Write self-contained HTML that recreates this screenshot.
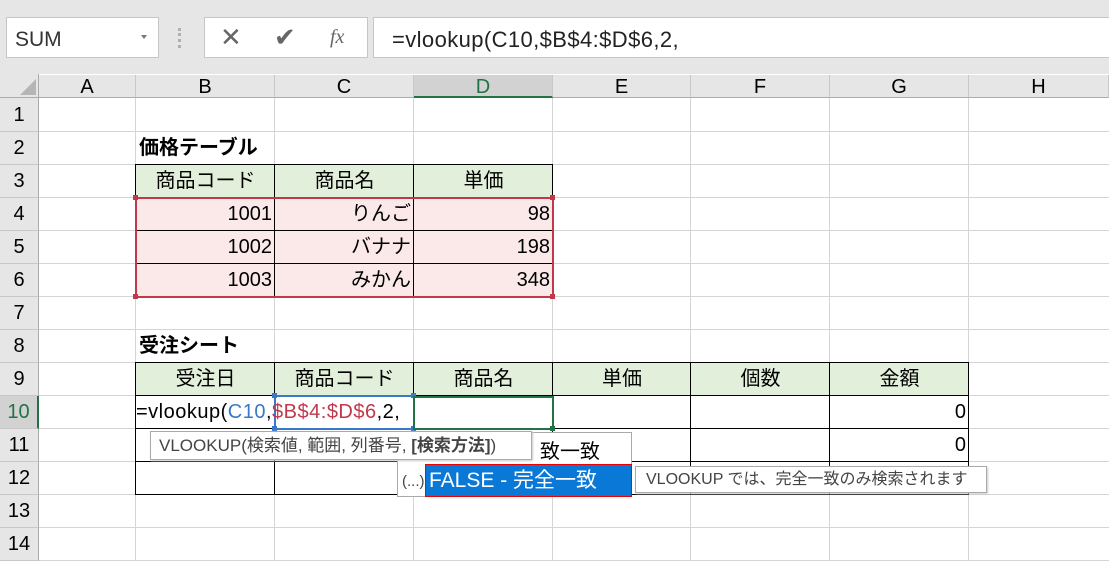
<!DOCTYPE html>
<html><head><meta charset="utf-8"><style>
*{margin:0;padding:0;box-sizing:border-box}
body{width:1109px;height:561px;overflow:hidden;background:#e6e6e6;font-family:"Liberation Sans","Noto Sans CJK JP",sans-serif;position:relative;color:#000}
.a{position:absolute}
.box{background:#fff;border:1px solid #c6c6c6}
.ch{position:absolute;top:75px;height:23px;text-align:center;font-size:20px;line-height:24px;border-right:1px solid #c8c8c8;border-bottom:1px solid #ababab}
.rh{position:absolute;left:0;width:39px;text-align:center;font-size:20px;border-bottom:1px solid #c8c8c8;border-right:1px solid #ababab}
.c{position:absolute;font-size:20px;line-height:34px;white-space:nowrap;padding:0 3px}
.r{text-align:right}.m{text-align:center}
</style></head><body>
<div class="a box" style="left:6px;top:17px;width:153px;height:41px"></div>
<div class="a" style="left:15px;top:28px;font-size:21px;color:#333">SUM</div>
<div class="a" style="left:141px;top:35px;width:0;height:0;border-left:3px solid transparent;border-right:3px solid transparent;border-top:4px solid #777"></div>
<div class="a" style="left:178px;top:28px;width:3px;height:20px;border-left:3px dotted #b0b0b0"></div>
<div class="a box" style="left:204px;top:17px;width:164px;height:41px"></div>
<div class="a" style="left:220px;top:22px;font-size:26px;color:#666">✕</div>
<div class="a" style="left:274px;top:22px;font-size:26px;color:#666">✔</div>
<div class="a" style="left:330px;top:26px;font-size:20px;color:#666;font-family:'Liberation Serif',serif;font-style:italic">fx</div>
<div class="a box" style="left:373px;top:17px;width:740px;height:41px"></div>
<div class="a" style="left:392px;top:27px;font-size:22px;color:#222;letter-spacing:0.4px">=vlookup(C10,$B$4:$D$6,2,</div>

<div class="a" style="left:0;top:74px;width:1109px;height:487px;background:#fff"></div>
<div class="a" style="left:0;top:74px;width:39px;height:24px;background:#e6e6e6;border-right:1px solid #ababab;border-bottom:1px solid #ababab"></div>
<div class="a" style="left:20px;top:79px;width:0;height:0;border-left:16px solid transparent;border-bottom:16px solid #b5b5b5"></div>
<div class="ch" style="left:39px;width:97px;background:#e6e6e6">A</div>
<div class="ch" style="left:136px;width:139px;background:#e6e6e6">B</div>
<div class="ch" style="left:275px;width:139px;background:#e6e6e6">C</div>
<div class="ch" style="left:414px;width:139px;background:#d2d2d2;color:#217346;border-bottom:2px solid #217346">D</div>
<div class="ch" style="left:553px;width:138px;background:#e6e6e6">E</div>
<div class="ch" style="left:691px;width:139px;background:#e6e6e6">F</div>
<div class="ch" style="left:830px;width:139px;background:#e6e6e6">G</div>
<div class="ch" style="left:969px;width:140px;background:#e6e6e6">H</div>

<svg class="a" style="left:0;top:0" width="1109" height="561">
<g stroke="#d4d4d4" stroke-width="1">
<line x1="135.5" y1="98" x2="135.5" y2="561"/><line x1="274.5" y1="98" x2="274.5" y2="561"/>
<line x1="413.5" y1="98" x2="413.5" y2="561"/><line x1="552.5" y1="98" x2="552.5" y2="561"/>
<line x1="690.5" y1="98" x2="690.5" y2="561"/><line x1="829.5" y1="98" x2="829.5" y2="561"/>
<line x1="968.5" y1="98" x2="968.5" y2="561"/>
<line x1="39" y1="131.5" x2="1109" y2="131.5"/><line x1="39" y1="164.5" x2="1109" y2="164.5"/>
<line x1="39" y1="197.5" x2="1109" y2="197.5"/><line x1="39" y1="230.5" x2="1109" y2="230.5"/>
<line x1="39" y1="263.5" x2="1109" y2="263.5"/><line x1="39" y1="296.5" x2="1109" y2="296.5"/>
<line x1="39" y1="329.5" x2="1109" y2="329.5"/><line x1="39" y1="362.5" x2="1109" y2="362.5"/>
<line x1="39" y1="395.5" x2="1109" y2="395.5"/><line x1="39" y1="428.5" x2="1109" y2="428.5"/>
<line x1="39" y1="461.5" x2="1109" y2="461.5"/><line x1="39" y1="494.5" x2="1109" y2="494.5"/>
<line x1="39" y1="527.5" x2="1109" y2="527.5"/><line x1="39" y1="560.5" x2="1109" y2="560.5"/>
</g>
<rect x="136" y="165" width="417" height="33" fill="#e2efda"/>
<rect x="136" y="198" width="417" height="99" fill="#fbe9e9"/>
<rect x="136" y="363" width="833" height="33" fill="#e2efda"/>
<g stroke="#000" stroke-width="1" fill="none">
<rect x="135.5" y="164.5" width="417" height="132"/>
<line x1="274.5" y1="165" x2="274.5" y2="297"/><line x1="413.5" y1="165" x2="413.5" y2="297"/>
<line x1="136" y1="197.5" x2="553" y2="197.5"/><line x1="136" y1="230.5" x2="553" y2="230.5"/><line x1="136" y1="263.5" x2="553" y2="263.5"/>
<rect x="135.5" y="362.5" width="833" height="132"/>
<line x1="274.5" y1="363" x2="274.5" y2="495"/><line x1="413.5" y1="363" x2="413.5" y2="495"/>
<line x1="552.5" y1="363" x2="552.5" y2="495"/><line x1="690.5" y1="363" x2="690.5" y2="495"/><line x1="829.5" y1="363" x2="829.5" y2="495"/>
<line x1="136" y1="395.5" x2="969" y2="395.5"/><line x1="136" y1="428.5" x2="969" y2="428.5"/><line x1="136" y1="461.5" x2="969" y2="461.5"/>
</g>
<rect x="136" y="198" width="417" height="99" fill="none" stroke="#c0394b" stroke-width="2"/>
<g fill="#c0394b"><rect x="133" y="195" width="5" height="5"/><rect x="550" y="195" width="5" height="5"/><rect x="133" y="294" width="5" height="5"/><rect x="550" y="294" width="5" height="5"/></g>
<rect x="275" y="396" width="139" height="33" fill="none" stroke="#3a78c9" stroke-width="2"/>
<g fill="#3a78c9"><rect x="272" y="393" width="5" height="5"/><rect x="411" y="393" width="5" height="5"/><rect x="272" y="426" width="5" height="5"/><rect x="411" y="426" width="5" height="5"/></g>
<rect x="414" y="397" width="139" height="32" fill="#fff" stroke="#217346" stroke-width="2"/>
<rect x="550" y="426" width="5" height="5" fill="#217346"/>
</svg>

<div class="rh" style="top:98px;height:34px;line-height:34px;background:#e6e6e6">1</div>
<div class="rh" style="top:132px;height:33px;line-height:33px;background:#e6e6e6">2</div>
<div class="rh" style="top:165px;height:33px;line-height:33px;background:#e6e6e6">3</div>
<div class="rh" style="top:198px;height:33px;line-height:33px;background:#e6e6e6">4</div>
<div class="rh" style="top:231px;height:33px;line-height:33px;background:#e6e6e6">5</div>
<div class="rh" style="top:264px;height:33px;line-height:33px;background:#e6e6e6">6</div>
<div class="rh" style="top:297px;height:33px;line-height:33px;background:#e6e6e6">7</div>
<div class="rh" style="top:330px;height:33px;line-height:33px;background:#e6e6e6">8</div>
<div class="rh" style="top:363px;height:33px;line-height:33px;background:#e6e6e6">9</div>
<div class="rh" style="top:396px;height:33px;line-height:33px;background:#d2d2d2;color:#217346;border-right:2px solid #217346">10</div>
<div class="rh" style="top:429px;height:33px;line-height:33px;background:#e6e6e6">11</div>
<div class="rh" style="top:462px;height:33px;line-height:33px;background:#e6e6e6">12</div>
<div class="rh" style="top:495px;height:33px;line-height:33px;background:#e6e6e6">13</div>
<div class="rh" style="top:528px;height:33px;line-height:33px;background:#e6e6e6">14</div>

<div class="c" style="left:136px;top:131px;font-weight:bold">価格テーブル</div>
<div class="c m" style="left:136px;top:164px;width:139px">商品コード</div>
<div class="c m" style="left:275px;top:164px;width:139px">商品名</div>
<div class="c m" style="left:414px;top:164px;width:139px">単価</div>
<div class="c r" style="left:136px;top:197px;width:139px">1001</div>
<div class="c r" style="left:275px;top:197px;width:139px">りんご</div>
<div class="c r" style="left:414px;top:197px;width:139px">98</div>
<div class="c r" style="left:136px;top:230px;width:139px">1002</div>
<div class="c r" style="left:275px;top:230px;width:139px">バナナ</div>
<div class="c r" style="left:414px;top:230px;width:139px">198</div>
<div class="c r" style="left:136px;top:263px;width:139px">1003</div>
<div class="c r" style="left:275px;top:263px;width:139px">みかん</div>
<div class="c r" style="left:414px;top:263px;width:139px">348</div>
<div class="c" style="left:136px;top:329px;font-weight:bold">受注シート</div>
<div class="c m" style="left:136px;top:362px;width:139px">受注日</div>
<div class="c m" style="left:275px;top:362px;width:139px">商品コード</div>
<div class="c m" style="left:414px;top:362px;width:139px">商品名</div>
<div class="c m" style="left:553px;top:362px;width:138px">単価</div>
<div class="c m" style="left:691px;top:362px;width:139px">個数</div>
<div class="c m" style="left:830px;top:362px;width:139px">金額</div>
<div class="c" style="left:133px;top:395px;letter-spacing:0.5px">=vlookup(<span style="color:#3a78c9">C10</span>,<span style="color:#c0394b">$B$4:$D$6</span>,2,</div>
<div class="c r" style="left:830px;top:395px;width:139px">0</div>
<div class="c r" style="left:830px;top:428px;width:139px">0</div>

<div class="a" style="left:397px;top:432px;width:235px;height:65px;background:#fff;border:1px solid #aaa"></div>
<div class="a" style="left:540px;top:435px;font-size:20px">致一致</div>
<div class="a" style="left:402px;top:473px;font-size:15px;color:#444">(...)</div>
<div class="a" style="left:425px;top:464px;width:207px;height:33px;background:#0a78d7;border:1px solid #e00;color:#fff;font-size:21px;line-height:31px;padding-left:3px">FALSE - 完全一致</div>
<div class="a" style="left:150px;top:431px;width:382px;height:29px;background:#fff;border:1px solid #aaa;box-shadow:1px 1px 2px #ccc;font-size:17px;line-height:27px;padding-left:8px;color:#444;white-space:nowrap">VLOOKUP(検索値, 範囲, 列番号, <b>[検索方法]</b>)</div>
<div class="a" style="left:635px;top:466px;width:352px;height:27px;background:#fff;border:1px solid #aaa;box-shadow:1px 1px 2px #ccc;font-size:16px;line-height:25px;padding-left:10px;color:#444;white-space:nowrap;overflow:hidden">VLOOKUP では、完全一致のみ検索されます</div>
</body></html>
